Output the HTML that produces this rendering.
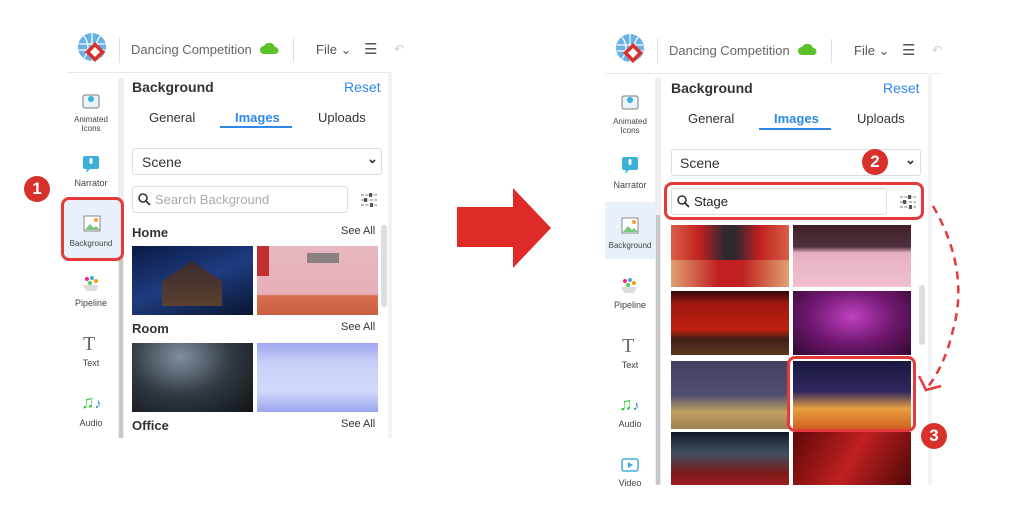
<!DOCTYPE html>
<html><head><meta charset="utf-8"><style>
*{margin:0;padding:0;box-sizing:border-box}
body{width:1024px;height:527px;background:#fff;position:relative;overflow:hidden;font-family:"Liberation Sans",sans-serif;color:#333}
.a{position:absolute}
.t{position:absolute;white-space:nowrap}
.img{position:absolute}
.side{font-size:9px;color:#444;text-align:center;width:50px}
.box{position:absolute;border:1px solid #ddd;border-radius:3px;background:#fff}
.red{position:absolute;border:3px solid #e43a3a;border-radius:8px}
.badge{position:absolute;width:26px;height:26px;border-radius:50%;background:#d8312c;color:#fff;font-weight:bold;font-size:17px;text-align:center;line-height:26px}
</style></head><body>

<!-- LEFT PANEL -->
<div class="a" style="left:67px;top:72px;width:325px;height:1px;background:#e8e8e8"></div>
<div class="a" style="left:388px;top:72px;width:4px;height:366px;background:#f3f3f3"></div>
<svg class="a" style="left:77px;top:32px" width="32" height="34" viewBox="0 0 32 34"><circle cx="15" cy="15" r="14" fill="#6ab2e6"/><path d="M2 12h26M2 18h26M15 1v28M7 4q8 11 0 22M23 4q-8 11 0 22" stroke="#fff" stroke-width="1.2" fill="none"/><path d="M18 10l10 10-10 10-10-10z" fill="#d8312c"/><path d="M18 15l5 5-5 5-5-5z" fill="#fff"/></svg>
<div class="a" style="left:119px;top:37px;width:1px;height:26px;background:#e0e0e0"></div>
<div class="t" style="left:131px;top:42px;font-size:13px;color:#666">Dancing Competition</div>
<svg class="a" style="left:259px;top:41px" width="20" height="14"><path d="M5 13a4 4 0 0 1 0-8a6 6 0 0 1 11 1a3.5 3.5 0 0 1 0 7z" fill="#5cc027"/></svg>
<div class="a" style="left:293px;top:38px;width:1px;height:24px;background:#e0e0e0"></div>
<div class="t" style="left:316px;top:42px;font-size:13px;color:#555">File ⌄</div>
<div class="t" style="left:364px;top:40px;font-size:15px;color:#555">☰</div>
<div class="t" style="left:394px;top:42px;font-size:12px;color:#ccc">↶</div>

<div class="a" style="left:118px;top:78px;width:6px;height:360px;background:#eee"></div>
<div class="a" style="left:119px;top:210px;width:4px;height:228px;background:#c8c8c8"></div>
<svg class="a" style="left:82px;top:92px" width="18" height="18"><rect x="1" y="3" width="16" height="13" rx="2" fill="#e8f4fb" stroke="#777"/><circle cx="9" cy="7" r="3" fill="#3bb0d8"/></svg>
<div class="t side" style="left:66px;top:115px;line-height:9px;font-size:8px;white-space:normal">Animated Icons</div>
<svg class="a" style="left:82px;top:155px" width="18" height="18"><rect x="1" y="1" width="16" height="13" rx="2" fill="#3bb0d8"/><path d="M5 14l-1 4 4-4z" fill="#3bb0d8"/><rect x="7.5" y="3" width="3" height="6" rx="1.5" fill="#fff"/></svg>
<div class="t side" style="left:66px;top:178px">Narrator</div>
<div class="red" style="left:61px;top:197px;width:63px;height:64px;background:#e8f0fc"></div>
<svg class="a" style="left:83px;top:215px" width="18" height="17"><rect x="1" y="1" width="16" height="15" fill="#fff" stroke="#888"/><path d="M2 15l5-6 4 4 2-2 4 4z" fill="#7cc47f"/><circle cx="13" cy="5" r="2" fill="#f0a030"/></svg>
<div class="t side" style="left:66px;top:239px;font-size:8px">Background</div>
<svg class="a" style="left:81px;top:275px" width="20" height="18"><circle cx="6" cy="4" r="2" fill="#f28"/><circle cx="11" cy="3" r="2" fill="#4ad"/><circle cx="15" cy="6" r="2" fill="#f90"/><circle cx="9" cy="8" r="2" fill="#5c5"/><path d="M2 10h16l-3 6H5z" fill="#ddd"/></svg>
<div class="t side" style="left:66px;top:298px">Pipeline</div>
<div class="t" style="left:83px;top:333px;font-size:20px;font-family:'Liberation Serif',serif;color:#666">T</div>
<div class="t side" style="left:66px;top:358px">Text</div>
<div class="t" style="left:81px;top:392px;font-size:18px;color:#3c3;font-weight:bold">♫<span style="color:#38c;font-size:14px">♪</span></div>
<div class="t side" style="left:66px;top:418px">Audio</div>

<div class="t" style="left:132px;top:79px;font-size:14px;font-weight:bold;color:#333">Background</div>
<div class="t" style="left:344px;top:79px;font-size:14px;color:#2f87e8">Reset</div>
<div class="t" style="left:149px;top:110px;font-size:13px">General</div>
<div class="t" style="left:235px;top:110px;font-size:13px;color:#2f87e8;font-weight:bold">Images</div>
<div class="t" style="left:318px;top:110px;font-size:13px">Uploads</div>
<div class="a" style="left:220px;top:126px;width:72px;height:2px;background:#2f87e8"></div>
<div class="box" style="left:132px;top:148px;width:250px;height:27px"></div>
<div class="t" style="left:142px;top:154px;font-size:14px">Scene</div>
<div class="t" style="left:367px;top:151px;font-size:13px;font-weight:bold">⌄</div>
<div class="box" style="left:132px;top:186px;width:216px;height:27px"></div>
<svg class="a" style="left:138px;top:193px" width="13" height="13"><circle cx="5" cy="5" r="4" stroke="#333" stroke-width="1.6" fill="none"/><path d="M8 8l4 4" stroke="#333" stroke-width="1.8"/></svg>
<div class="t" style="left:155px;top:192px;font-size:13px;color:#aaa">Search Background</div>
<svg class="a" style="left:361px;top:193px" width="16" height="14"><path d="M0 2h16M0 7h16M0 12h16" stroke="#777" stroke-dasharray="3 1.5"/><rect x="8" y="0" width="3" height="4" fill="#555"/><rect x="3" y="5" width="3" height="4" fill="#555"/><rect x="9" y="10" width="3" height="4" fill="#555"/></svg>
<div class="t" style="left:132px;top:225px;font-size:13px;font-weight:bold">Home</div>
<div class="t" style="left:341px;top:225px;font-size:11px">See All</div>
<div class="a" style="left:381px;top:225px;width:6px;height:82px;background:#ddd;border-radius:3px"></div>
<div class="img" style="left:132px;top:246px;width:121px;height:69px;background:linear-gradient(160deg,#0a1a45,#1e3c80 50%,#0a1530)"><div class="a" style="left:30px;top:15px;width:60px;height:45px;background:linear-gradient(#3a2a30,#5a4030);clip-path:polygon(50% 0,100% 45%,100% 100%,0 100%,0 45%)"></div></div>
<div class="img" style="left:257px;top:246px;width:121px;height:69px;background:linear-gradient(#e8b8c0,#e8aeb8 70%,#d87050 72%,#c86040)"><div class="a" style="left:50px;top:7px;width:32px;height:10px;background:#8a8080"></div><div class="a" style="left:0;top:0;width:12px;height:30px;background:#c03030"></div></div>
<div class="t" style="left:132px;top:321px;font-size:13px;font-weight:bold">Room</div>
<div class="t" style="left:341px;top:321px;font-size:11px">See All</div>
<div class="img" style="left:132px;top:343px;width:121px;height:69px;background:radial-gradient(ellipse at 40% 20%,#8090a0,#303840 50%,#101418)"></div>
<div class="img" style="left:257px;top:343px;width:121px;height:69px;background:linear-gradient(#a0a8f0,#c8d0f8 30%,#d0d8fa 70%,#9aa6ee)"></div>
<div class="t" style="left:132px;top:418px;font-size:13px;font-weight:bold">Office</div>
<div class="t" style="left:341px;top:418px;font-size:11px">See All</div>
<div class="badge" style="left:24px;top:176px">1</div>

<!-- ARROW -->
<svg class="a" style="left:455px;top:186px" width="98" height="84"><path d="M2 21h56V2l38 40-38 40V61H2z" fill="#e02a28"/></svg>

<!-- RIGHT PANEL -->
<div class="a" style="left:605px;top:73px;width:335px;height:1px;background:#e8e8e8"></div>
<div class="a" style="left:928px;top:73px;width:4px;height:412px;background:#f3f3f3"></div>
<svg class="a" style="left:615px;top:33px" width="32" height="34" viewBox="0 0 32 34"><circle cx="15" cy="15" r="14" fill="#6ab2e6"/><path d="M2 12h26M2 18h26M15 1v28M7 4q8 11 0 22M23 4q-8 11 0 22" stroke="#fff" stroke-width="1.2" fill="none"/><path d="M18 10l10 10-10 10-10-10z" fill="#d8312c"/><path d="M18 15l5 5-5 5-5-5z" fill="#fff"/></svg>
<div class="a" style="left:657px;top:38px;width:1px;height:26px;background:#e0e0e0"></div>
<div class="t" style="left:669px;top:43px;font-size:13px;color:#666">Dancing Competition</div>
<svg class="a" style="left:797px;top:42px" width="20" height="14"><path d="M5 13a4 4 0 0 1 0-8a6 6 0 0 1 11 1a3.5 3.5 0 0 1 0 7z" fill="#5cc027"/></svg>
<div class="a" style="left:831px;top:39px;width:1px;height:24px;background:#e0e0e0"></div>
<div class="t" style="left:854px;top:43px;font-size:13px;color:#555">File ⌄</div>
<div class="t" style="left:902px;top:41px;font-size:15px;color:#555">☰</div>
<div class="t" style="left:932px;top:43px;font-size:12px;color:#ccc">↶</div>

<div class="a" style="left:655px;top:78px;width:6px;height:407px;background:#eee"></div>
<div class="a" style="left:656px;top:215px;width:4px;height:270px;background:#c8c8c8"></div>
<svg class="a" style="left:621px;top:93px" width="18" height="18"><rect x="1" y="3" width="16" height="13" rx="2" fill="#e8f4fb" stroke="#777"/><circle cx="9" cy="7" r="3" fill="#3bb0d8"/></svg>
<div class="t side" style="left:605px;top:117px;line-height:9px;font-size:8px;white-space:normal">Animated Icons</div>
<svg class="a" style="left:621px;top:156px" width="18" height="18"><rect x="1" y="1" width="16" height="13" rx="2" fill="#3bb0d8"/><path d="M5 14l-1 4 4-4z" fill="#3bb0d8"/><rect x="7.5" y="3" width="3" height="6" rx="1.5" fill="#fff"/></svg>
<div class="t side" style="left:605px;top:180px">Narrator</div>
<div class="a" style="left:605px;top:202px;width:50px;height:57px;background:#e8f0fc"></div>
<svg class="a" style="left:621px;top:217px" width="18" height="17"><rect x="1" y="1" width="16" height="15" fill="#fff" stroke="#888"/><path d="M2 15l5-6 4 4 2-2 4 4z" fill="#7cc47f"/><circle cx="13" cy="5" r="2" fill="#f0a030"/></svg>
<div class="t side" style="left:605px;top:241px;font-size:8px">Background</div>
<svg class="a" style="left:619px;top:277px" width="20" height="18"><circle cx="6" cy="4" r="2" fill="#f28"/><circle cx="11" cy="3" r="2" fill="#4ad"/><circle cx="15" cy="6" r="2" fill="#f90"/><circle cx="9" cy="8" r="2" fill="#5c5"/><path d="M2 10h16l-3 6H5z" fill="#ddd"/></svg>
<div class="t side" style="left:605px;top:300px">Pipeline</div>
<div class="t" style="left:622px;top:335px;font-size:20px;font-family:'Liberation Serif',serif;color:#666">T</div>
<div class="t side" style="left:605px;top:360px">Text</div>
<div class="t" style="left:619px;top:394px;font-size:18px;color:#3c3;font-weight:bold">♫<span style="color:#38c;font-size:14px">♪</span></div>
<div class="t side" style="left:605px;top:419px">Audio</div>
<svg class="a" style="left:621px;top:458px" width="18" height="14"><rect x="1" y="1" width="16" height="12" rx="2" fill="none" stroke="#3bb0d8" stroke-width="1.5"/><path d="M7 4l5 3-5 3z" fill="#3bb0d8"/></svg>
<div class="t side" style="left:605px;top:478px">Video</div>

<div class="t" style="left:671px;top:80px;font-size:14px;font-weight:bold">Background</div>
<div class="t" style="left:883px;top:80px;font-size:14px;color:#2f87e8">Reset</div>
<div class="t" style="left:688px;top:111px;font-size:13px">General</div>
<div class="t" style="left:774px;top:111px;font-size:13px;color:#2f87e8;font-weight:bold">Images</div>
<div class="t" style="left:857px;top:111px;font-size:13px">Uploads</div>
<div class="a" style="left:759px;top:128px;width:72px;height:2px;background:#2f87e8"></div>
<div class="box" style="left:671px;top:149px;width:250px;height:27px"></div>
<div class="t" style="left:680px;top:155px;font-size:14px">Scene</div>
<div class="t" style="left:905px;top:152px;font-size:13px;font-weight:bold">⌄</div>
<div class="box" style="left:671px;top:188px;width:216px;height:27px"></div>
<svg class="a" style="left:677px;top:195px" width="13" height="13"><circle cx="5" cy="5" r="4" stroke="#333" stroke-width="1.6" fill="none"/><path d="M8 8l4 4" stroke="#333" stroke-width="1.8"/></svg>
<div class="t" style="left:694px;top:194px;font-size:13px;color:#222">Stage</div>
<svg class="a" style="left:900px;top:195px" width="16" height="14"><path d="M0 2h16M0 7h16M0 12h16" stroke="#777" stroke-dasharray="3 1.5"/><rect x="8" y="0" width="3" height="4" fill="#555"/><rect x="3" y="5" width="3" height="4" fill="#555"/><rect x="9" y="10" width="3" height="4" fill="#555"/></svg>
<div class="red" style="left:664px;top:182px;width:260px;height:38px"></div>
<div class="a" style="left:919px;top:285px;width:6px;height:60px;background:#ddd;border-radius:3px"></div>

<div class="img" style="left:671px;top:225px;width:118px;height:62px;background:linear-gradient(90deg,#d86048,#c02020 25%,#302830 45%,#302830 55%,#c02020 75%,#d86048)"><div class="a" style="left:0;top:35px;width:118px;height:27px;background:linear-gradient(90deg,#e0a070,#c02020 40%,#c02020 60%,#e0a070)"></div></div>
<div class="img" style="left:793px;top:225px;width:118px;height:62px;background:linear-gradient(#402020,#503040 35%,#e8b0c0 45%,#f0c0d0)"></div>
<div class="img" style="left:671px;top:291px;width:118px;height:64px;background:linear-gradient(#300808,#a01810 20%,#c02010 60%,#402018 75%,#5a3820)"></div>
<div class="img" style="left:793px;top:291px;width:118px;height:64px;background:radial-gradient(ellipse at 50% 40%,#c040c0,#701870 50%,#300830)"></div>
<div class="img" style="left:671px;top:361px;width:118px;height:68px;background:linear-gradient(#404060,#505070 50%,#c0a060 75%,#a08050)"></div>
<div class="img" style="left:793px;top:361px;width:118px;height:68px;background:linear-gradient(#1a1840,#302860 45%,#e8a040 70%,#d06020)"></div>
<div class="red" style="left:787px;top:356px;width:129px;height:76px"></div>
<div class="img" style="left:671px;top:432px;width:118px;height:53px;background:linear-gradient(#101828,#405060 40%,#801818 80%,#a02020)"></div>
<div class="img" style="left:793px;top:432px;width:118px;height:53px;background:linear-gradient(120deg,#600808,#c02020 50%,#500808)"></div>

<div class="badge" style="left:862px;top:149px">2</div>
<div class="badge" style="left:921px;top:423px">3</div>
<svg class="a" style="left:915px;top:200px" width="60" height="200"><path d="M18 6Q55 70 38 130Q30 165 12 188" stroke="#e43a3a" stroke-width="2.5" fill="none" stroke-dasharray="8 6"/><path d="M4 176L11 190 26 186" stroke="#e43a3a" stroke-width="2.5" fill="none"/></svg>
</body></html>
